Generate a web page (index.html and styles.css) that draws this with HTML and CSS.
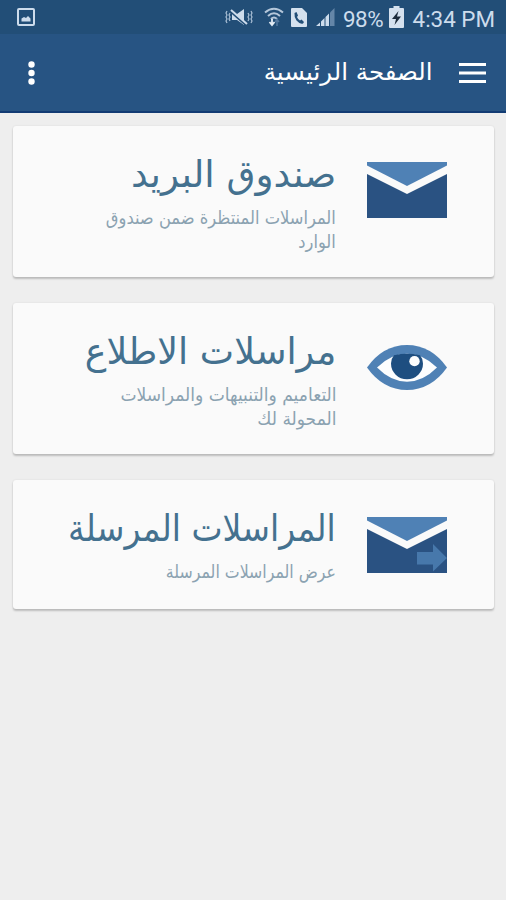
FILE: index.html
```html
<!DOCTYPE html>
<html lang="ar" dir="rtl">
<head>
  <meta charset="UTF-8">
  <title>الصفحة الرئيسية</title>
  <link rel="stylesheet" href="styles.css">
</head>
<body>
  <!-- شريط الحالة -->
  <div class="status" dir="ltr">
    <svg class="shot" width="18" height="18" viewBox="0 0 18 18">
      <rect x="1" y="1" width="16" height="16" rx="1" fill="none" stroke="#cddcec" stroke-width="2"/>
      <path d="M4.500 13.500V10.500L7 9L9 10L11 8L13.500 10.500V13.500Z" fill="#cddcec"/>
    </svg>
    <svg class="mute" width="28" height="18" viewBox="0 0 28 18">
      <path d="M2 3l-1 2 1 2-1 2 1 2-1 2 1 2M5 5l-1 2 1 2-1 2 1 2M26 3l1 2-1 2 1 2-1 2 1 2-1 2M23 5l1 2-1 2 1 2-1 2" fill="none" stroke="#a9bfd5" stroke-width="1.200"/>
      <path d="M7 6H12L19 1V17L12 12H7Z" fill="#cddcec"/>
      <path d="M6 4L22 18" stroke="#224e77" stroke-width="2"/>
      <path d="M6 2L22 16" stroke="#cddcec" stroke-width="2"/>
    </svg>
    <svg class="wifi" width="20" height="20" viewBox="0 0 20 20">
      <path d="M1 5.500Q10 -2 19 5.500M4 9Q10 3.500 16 9M7 12Q10 9 13 12" fill="none" stroke="#b5c7da" stroke-width="2"/>
      <path d="M8 12V17M5.500 15L8 18L10.500 15" fill="none" stroke="#e4edf5" stroke-width="1.800"/>
      <path d="M13 19V13M11 15L13 12.500L15 15" fill="none" stroke="#54799f" stroke-width="1.500"/>
    </svg>
    <svg class="sim" width="16" height="19" viewBox="0 0 16 19">
      <path d="M1 0H11L16 5V18Q16 19 15 19H1Q0 19 0 18V1Q0 0 1 0Z" fill="#d5e1ee"/>
      <path d="M3.500 5L5.500 4L7 7.500L6 9Q7 11.500 9 12.500L10.500 11.500L13 14L12 15.500Q9 16.500 5.500 12.500Q3 9 3.500 5Z" fill="#224e77"/>
    </svg>
    <svg class="signal" width="19" height="18" viewBox="0 0 19 18">
      <path d="M0 18L4 14.500V18ZM5 18V13.500L8.500 10V18ZM9.500 18V9L13 5.500V18Z" fill="#cddcec"/>
      <path d="M14 18V4.500L18.500 0V18Z" fill="#6486a8"/>
    </svg>
    <span class="percent">98%</span>
    <svg class="battery" width="15" height="22" viewBox="0 0 15 22">
      <path d="M4.500 0H10.500V2H14Q15 2 15 3V21Q15 22 14 22H1Q0 22 0 21V3Q0 2 1 2H4.500Z" fill="#d5e1ee"/>
      <path d="M9.500 5L3 13H7L5.500 19L12 10.500H8Z" fill="#1d2b3b"/>
    </svg>
    <span class="clock">4:34 PM</span>
  </div>

  <!-- شريط التطبيق -->
  <header class="appbar">
    <svg class="menu" width="27" height="20" viewBox="0 0 27 20">
      <path d="M0 1.500H27M0 10H27M0 18.500H27" stroke="#fff" stroke-width="3"/>
    </svg>
    <h1 class="title"><span>الصفحة الرئيسية</span></h1>
    <svg class="more" width="7" height="24" viewBox="0 0 7 24">
      <circle cx="3.500" cy="3.500" r="3.200" fill="#fff"/>
      <circle cx="3.500" cy="12" r="3.200" fill="#fff"/>
      <circle cx="3.500" cy="20.500" r="3.200" fill="#fff"/>
    </svg>
  </header>

  <main class="cards">
    <!-- صندوق البريد -->
    <section class="card inbox">
      <svg class="icon" width="80" height="56" viewBox="0 0 80 56">
        <path d="M0 0H80V3.500L40 24L0 3.500Z" fill="#4f81b5"/>
        <path d="M0 12L40 32L80 12V56H0Z" fill="#2a5282"/>
      </svg>
      <div class="text">
        <h2 class="name"><span>صندوق البريد</span></h2>
        <p class="desc"><span>المراسلات المنتظرة ضمن صندوق<br>الوارد</span></p>
      </div>
    </section>

    <!-- مراسلات الاطلاع -->
    <section class="card notices">
      <svg class="icon eye" width="80" height="45" viewBox="0 0 80 46" preserveAspectRatio="none">
        <path d="M0 23Q16 0 40 0T80 23Q64 46 40 46T0 23Z" fill="#4f81b5"/>
        <path d="M10 23Q24 9 40 9T70 23Q56 37.500 40 37.500T10 23Z" fill="#fcfdfe"/>
        <path d="M27 10.500Q40 7.500 53 10.500Q56 14 56 19A16 16 0 0 1 24 19Q24 14 27 10.500Z" fill="#1e4e80"/>
        <circle cx="47.500" cy="16.500" r="5.200" fill="#fcfdfe"/>
      </svg>
      <div class="text">
        <h2 class="name"><span>مراسلات الاطلاع</span></h2>
        <p class="desc"><span>التعاميم والتنبيهات والمراسلات<br>المحولة لك</span></p>
      </div>
    </section>

    <!-- المراسلات المرسلة -->
    <section class="card sent">
      <svg class="icon" width="80" height="56" viewBox="0 0 80 56">
        <path d="M0 0H80V3.500L40 24L0 3.500Z" fill="#4f81b5"/>
        <path d="M0 12L40 32L80 12V56H0Z" fill="#2a5282"/>
        <path d="M50 35H66V27L80 41L66 54.500V47.500H50Z" fill="#4778ab"/>
      </svg>
      <div class="text">
        <h2 class="name"><span>المراسلات المرسلة</span></h2>
        <p class="desc"><span>عرض المراسلات المرسلة</span></p>
      </div>
    </section>
  </main>
</body>
</html>
```
FILE: styles.css
```css
* {
  box-sizing: border-box;
}
body {
  margin: 0;
  height: 900px;
  background: #eeeeee;
  font-family: "DejaVu Sans", sans-serif;
  overflow: hidden;
}
.status {
  display: flex;
  align-items: center;
  height: 34px;
  padding: 0 11px 0 17px;
  background: #224e77;
  color: #cddcec;
  font: 22.4px/34px Roboto, sans-serif;
  white-space: nowrap;
}
.mute { margin-left: 190px; }
.wifi { margin-left: 11px; }
.sim { margin-left: 7px; }
.signal { margin-left: 9px; }
.percent {
  margin-left: 8px;
  padding-top: 3px;
  width: 42px;
  letter-spacing: -0.5px;
}
.battery { margin-left: 4px; }
.clock {
  margin-left: auto;
  padding-top: 3px;
}
.status svg { flex: none; }
.appbar {
  display: flex;
  align-items: center;
  height: 79px;
  padding: 0 20px 0 28px;
  background: #275483;
  border-bottom: 2px solid #123b73;
}
.title {
  margin: 0 26px 2px auto;
  color: #fff;
  font-size: 24px;
  font-weight: normal;
  line-height: 40px;
}
.title span,
.name span,
.desc span {
  display: inline-block;
  transform-origin: right center;
}
.title span { transform: scaleX(1.02); }
.cards {
  display: flex;
  flex-direction: column;
  gap: 26px;
  padding: 13px 12px 0 13px;
}
.card {
  display: flex;
  align-items: flex-start;
  min-height: 129px;
  padding: 25px 47px 23px 20px;
  background: #fafafa;
  border-radius: 3px;
  box-shadow: 0 2px 2px rgba(0, 0, 0, 0.2), 0 0 2px rgba(0, 0, 0, 0.1);
}
.icon {
  flex: none;
  margin-top: 12px;
}
.inbox .icon { margin-top: 11px; }
.icon.eye { margin-top: 17px; }
.text { margin-right: 31px; }
.name {
  margin: 0;
  color: #44718f;
  font-size: 37px;
  font-weight: normal;
  line-height: 48px;
  white-space: nowrap;
}
.desc {
  margin: 7px 0 0;
  color: #8ba2b1;
  font-size: 18px;
  line-height: 24px;
  white-space: nowrap;
}
/* عرض النصوص */
.inbox .name span { transform: scaleX(1.01); }
.inbox .desc span { transform: scaleX(0.906); }
.notices .name span { transform: scaleX(0.985); }
.notices .desc span { transform: scaleX(0.95); }
.sent .name span { transform: scaleX(0.893); }
.sent .desc span { transform: scaleX(0.877); }
```
